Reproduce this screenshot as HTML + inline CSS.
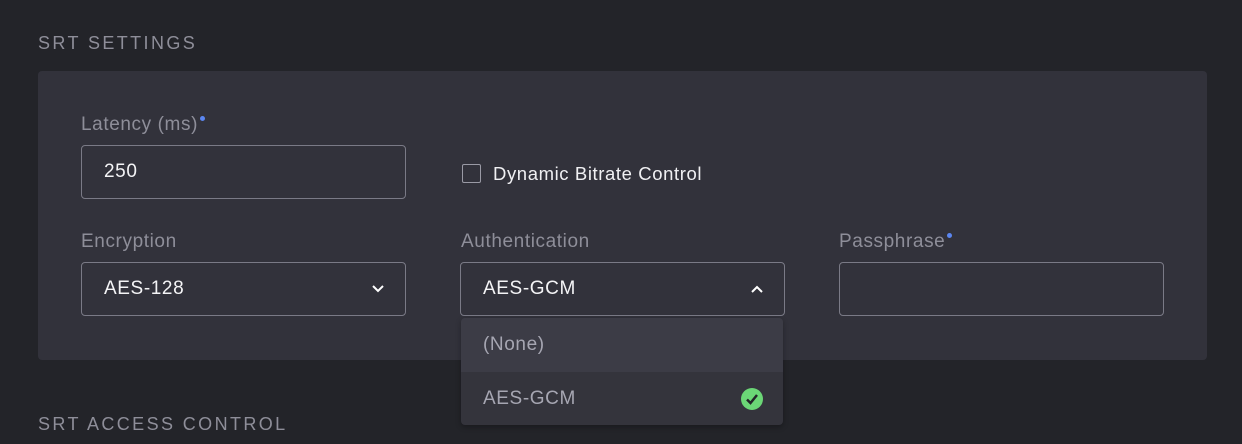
<!DOCTYPE html>
<html><head><style>
body{margin:0;width:1242px;height:444px;background:#232429;font-family:"Liberation Sans",sans-serif;position:relative;overflow:hidden}
.h{position:absolute;left:38px;font-size:18px;letter-spacing:2.4px;color:#8e8e99}
.card{position:absolute;left:38px;top:71px;width:1169px;height:289px;background:#32323b;border-radius:4px}
.lbl{position:absolute;font-size:19px;letter-spacing:0.6px;color:#8e8e99}
.lbl i{position:absolute;width:5px;height:5px;border-radius:50%;background:#5b86f0;top:2px;margin-left:2px}
.inp{position:absolute;width:325px;height:54px;border:1px solid #7a7a86;border-radius:4px;box-sizing:border-box;color:#f4f4f6;font-size:19px;letter-spacing:0.6px;line-height:52px;padding-left:22px}
.inp svg{position:absolute;right:20px;top:21px}
.dd{position:absolute;left:461px;top:318px;width:322px;height:107px;background:#34343c;border-radius:4px;overflow:hidden;box-shadow:0 2px 6px rgba(0,0,0,.3)}
.row{height:54px;line-height:54px;padding-left:22px;font-size:19px;letter-spacing:0.6px;color:#a6a6b2;position:relative}
</style></head><body>
<div class="h" style="top:33px">SRT SETTINGS</div>
<div class="card"></div>
<div class="lbl" style="left:81px;top:114px">Latency (ms)<i></i></div>
<div class="inp" style="left:81px;top:145px">250</div>
<div style="position:absolute;left:462px;top:164px;width:19px;height:19px;border:1.5px solid #9a9aa5;border-radius:2px;box-sizing:border-box"></div>
<div style="position:absolute;left:493px;top:163px;font-size:18.5px;letter-spacing:0.6px;color:#f0f0f3">Dynamic Bitrate Control</div>
<div class="lbl" style="left:81px;top:231px">Encryption</div>
<div class="inp" style="left:81px;top:262px">AES-128<svg width="14" height="10" viewBox="0 0 14 10"><path d="M2 2l5 5 5-5" fill="none" stroke="#fff" stroke-width="2"/></svg></div>
<div class="lbl" style="left:461px;top:231px">Authentication</div>
<div class="inp" style="left:460px;top:262px">AES-GCM<svg width="14" height="10" viewBox="0 0 14 10"><path d="M2 8l5-5 5 5" fill="none" stroke="#fff" stroke-width="2"/></svg></div>
<div class="lbl" style="left:839px;top:231px">Passphrase<i></i></div>
<div class="inp" style="left:839px;top:262px"></div>
<div class="dd"><div class="row" style="background:#3c3c46">(None)</div><div class="row">AES-GCM<svg style="position:absolute;right:20px;top:16px" width="22" height="22" viewBox="0 0 22 22"><circle cx="11" cy="11" r="11" fill="#6bd676"/><path d="M6 11.5l3.5 3.5 6.5-8" fill="none" stroke="#232429" stroke-width="2.5"/></svg></div></div>
<div class="h" style="top:414px">SRT ACCESS CONTROL</div>
</body></html>
